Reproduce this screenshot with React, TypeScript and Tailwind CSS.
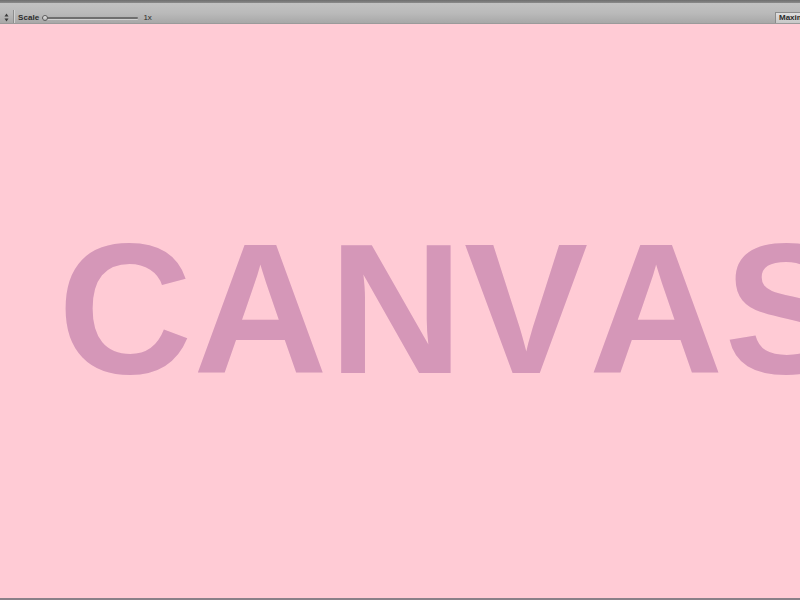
export default function App() {
  return (
    <div className="w-[800px] h-[600px] flex flex-col overflow-hidden bg-[#7c7c7c]" style={{ fontFamily: '"Liberation Sans", Arial, sans-serif' }}>
      {/* top edge */}
      <div className="h-[3px] bg-gradient-to-b from-[#6e6e6e] to-[#8a8a8a]" />
      {/* toolbar */}
      <div className="h-[21px] flex items-end bg-gradient-to-b from-[#c2c2c2] via-[#bababa] to-[#a8a8a8] border-b border-[#9a9a9a]">
        <div className="w-[13px] h-[11px] flex items-center justify-center">
          <svg width="5" height="9" viewBox="0 0 5 9">
            <path d="M2.5 0.5 L4.5 3.5 L0.5 3.5 Z" fill="#3a3a3a" />
            <path d="M2.5 8.5 L4.5 5.5 L0.5 5.5 Z" fill="#3a3a3a" />
          </svg>
        </div>
        <div className="w-px h-[13px] bg-[#8e8e8e]" />
        <div className="w-px h-[13px] bg-[#d2d2d2]" />
        <div className="h-[10px] flex items-center">
          <span className="ml-[3px] text-[8px] font-bold text-[#2c2c2c] leading-none tracking-[0.1px]">Scale</span>
          <div className="relative ml-[3px] w-[96px] h-[8px] flex items-center">
            <div className="w-full h-[2px] rounded-full bg-[#6e6e6e] shadow-[0_1px_0_#cfcfcf]" />
            <div className="absolute left-0 top-[1px] w-[6px] h-[6px] rounded-full bg-gradient-to-b from-[#e6e6e6] to-[#b4b4b4] border border-[#5e5e5e]" />
          </div>
          <span className="ml-[5px] text-[8px] text-[#2c2c2c] leading-none">1x</span>
        </div>
        <div className="flex-1" />
        <div className="h-[11px] w-[25px] flex items-center pl-[3px] bg-gradient-to-b from-[#dedede] to-[#c8c8c8] border-l border-t border-[#8c8c8c] overflow-hidden">
          <span className="text-[8px] font-bold text-[#2a2a2a] leading-none whitespace-nowrap">Maxim</span>
        </div>
      </div>
      {/* canvas */}
      <div className="flex-1 bg-[#ffcbd5] overflow-hidden flex flex-col">
        <div className="h-[192px]" />
        <div className="pl-[58px] text-[186px] font-bold leading-none text-[#d597b8] whitespace-nowrap [font-kerning:none] tracking-[1px]">CANVAS</div>
      </div>
      <div className="h-[2px] bg-[#8a8088]" />
    </div>
  );
}
